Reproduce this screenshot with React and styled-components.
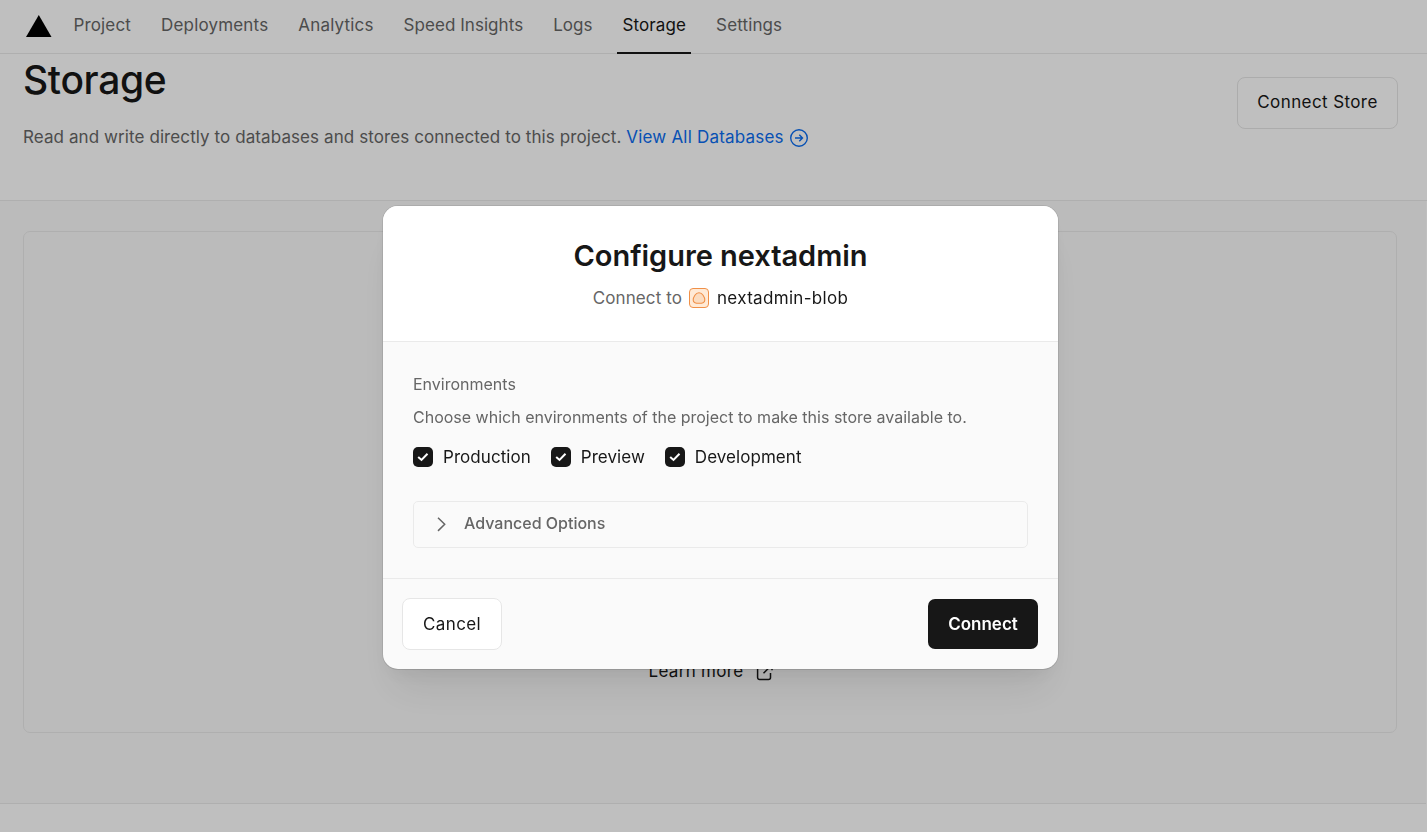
import React from 'react';
import styled, { createGlobalStyle } from 'styled-components';

const GlobalStyle = createGlobalStyle`
  * { box-sizing: border-box; }
  html, body { margin: 0; height: 100%; overflow: hidden; }
  body {
    background: #fff;
    color: #171717;
    font-family: Inter, 'Liberation Sans', sans-serif;
    font-size: 17px;
  }
  button { font: inherit; color: inherit; }
`;

const Page = styled.div`
  height: 832px;
  display: flex;
  flex-direction: column;
  overflow: hidden;
`;

const TopBar = styled.header`
  height: 54px;
  flex: none;
  display: flex;
  align-items: stretch;
  padding-left: 26px;
  border-bottom: 1px solid #eaeaea;
`;

const Logo = styled.svg`
  width: 26px;
  height: 22px;
  margin-top: 15px;
  margin-right: 16.4px;
`;

const Nav = styled.nav`
  display: flex;
  gap: 20px;
`;

const Tab = styled.a`
  height: 54px;
  padding: 0 5px;
  line-height: 51px;
  white-space: nowrap;
  letter-spacing: ${(p) => p.$tracking || 0}px;
  color: ${(p) => (p.$active ? '#171717' : '#666')};
  border-bottom: 2px solid ${(p) => (p.$active ? '#171717' : 'transparent')};
`;

const Hero = styled.section`
  height: 147px;
  flex: none;
  display: flex;
  justify-content: space-between;
  padding: 0 29px 0 23px;
  border-bottom: 1px solid #eaeaea;
`;

const PageTitle = styled.h1`
  margin: 0;
  font-size: 39px;
  line-height: 52px;
  font-weight: 500;
  letter-spacing: -0.35px;
`;

const Lead = styled.p`
  display: flex;
  align-items: center;
  margin: 18px 0 0;
  line-height: 26px;
  color: #666;
  white-space: pre;
  letter-spacing: 0.09px;
`;

const Link = styled.a`
  display: flex;
  align-items: center;
  gap: 6px;
  color: #0a6cf0;
  letter-spacing: 0.2px;
  svg { position: relative; top: 1px; }
`;

const Button = styled.button`
  width: ${(p) => p.$width}px;
  height: ${(p) => (p.$primary ? 50 : 52)}px;
  margin-top: ${(p) => p.$top || 0}px;
  padding: 0 0 ${(p) => (p.$top ? 2 : 1)}px;
  border-radius: ${(p) => (p.$primary ? 7 : 8)}px;
  border: ${(p) => (p.$primary ? 'none' : '1px solid #e6e6e6')};
  background: ${(p) => (p.$primary ? '#171717' : '#fff')};
  color: ${(p) => (p.$primary ? '#fff' : '#171717')};
  font-weight: ${(p) => (p.$primary ? 600 : 400)};
  letter-spacing: ${(p) => (p.$primary ? 0 : 0.4)}px;
`;

const Content = styled.main`
  height: 603px;
  flex: none;
  margin-right: 1px;
  padding: 30px 29px 0 23px;
  background: #fafafa;
  border-bottom: 1px solid #eaeaea;
`;

const EmptyState = styled.div`
  height: 502px;
  display: flex;
  align-items: flex-end;
  justify-content: center;
  padding: 0 0 48px 3px;
  border: 1px solid #eaeaea;
  border-radius: 7px;
`;

const LearnMore = styled.a`
  display: flex;
  align-items: center;
  gap: 13px;
  line-height: 26px;
  letter-spacing: 0.3px;
  svg { position: relative; top: 1px; }
`;

const Backdrop = styled.div`
  position: fixed;
  inset: 0;
  display: flex;
  align-items: flex-start;
  justify-content: center;
  padding: 206px 0 0 14px;
  background: rgba(0, 0, 0, 0.25);
`;

const Dialog = styled.div`
  width: 675px;
  height: 463px;
  display: flex;
  flex-direction: column;
  border-radius: 15px;
  overflow: hidden;
  background: #fafafa;
  box-shadow: 0 0 0 1px rgba(0, 0, 0, 0.08), 0 1px 1px rgba(0, 0, 0, 0.05),
    0 10px 20px -5px rgba(0, 0, 0, 0.06), 0 30px 40px -10px rgba(0, 0, 0, 0.08);
`;

const DialogHeader = styled.header`
  height: 136px;
  display: flex;
  flex-direction: column;
  align-items: center;
  padding-top: 30px;
  background: #fff;
  border-bottom: 1px solid #eaeaea;
`;

const DialogTitle = styled.h2`
  margin: 0;
  font-size: 29px;
  line-height: 39px;
  font-weight: 600;
  letter-spacing: -0.05px;
`;

const Target = styled.div`
  display: flex;
  align-items: center;
  margin-top: 10px;
  line-height: 26px;
  color: #666;
  letter-spacing: 0.1px;
  svg { margin: 0 8px 0 7px; }
`;

const StoreName = styled.span`
  color: #171717;
  letter-spacing: 0.32px;
`;

const DialogBody = styled.div`
  height: 237px;
  padding: 30px 30px 0;
  border-bottom: 1px solid #eaeaea;
`;

const Caption = styled.div`
  font-size: 16px;
  line-height: 25px;
  margin-bottom: 8px;
  color: #666;
`;

const Choices = styled.div`
  display: flex;
  gap: 20px;
  margin-top: 17px;
`;

const Choice = styled.label`
  display: flex;
  align-items: center;
  gap: 10px;
  line-height: 20px;
  letter-spacing: 0.05px;
`;

const Box = styled.span`
  width: 20px;
  height: 20px;
  display: grid;
  place-items: center;
  border-radius: 5px;
  background: #171717;
`;

const Disclosure = styled.div`
  height: 47px;
  display: flex;
  align-items: center;
  gap: 17px;
  margin-top: 34px;
  padding: 0 0 3px 22px;
  border: 1px solid #eaeaea;
  border-radius: 5px;
  color: #666;
  font-size: 16px;
  font-weight: 500;
  svg { position: relative; top: 1px; }
`;

const DialogFooter = styled.footer`
  flex: 1;
  display: flex;
  align-items: center;
  justify-content: space-between;
  padding: 0 20px 0 19px;
`;

const tabs = [
  ['Project', 0.17],
  ['Deployments', 0.17],
  ['Analytics', 0.18],
  ['Speed Insights', 0.05],
  ['Logs', 0],
  ['Storage', 0.13],
  ['Settings', 0.13],
];

const environments = ['Production', 'Preview', 'Development'];

function ArrowCircle() {
  return (
    <svg width="18" height="18" viewBox="0 0 18 18" fill="none" stroke="currentColor" strokeWidth="1.4">
      <circle cx="9" cy="9" r="8.3" />
      <path d="M5 9h7.4M9.3 5.8L12.5 9l-3.2 3.2" />
    </svg>
  );
}

function ExternalIcon() {
  return (
    <svg width="18" height="18" viewBox="0 0 18 18" fill="none" stroke="currentColor" strokeWidth="1.5">
      <path d="M7 2H3.5A2 2 0 0 0 1.600 4v10.500a2 2 0 0 0 2 2H12.500a2 2 0 0 0 2-2V10M10.500 1.800H16v5.500M16 1.800l-8.500 8.500" />
    </svg>
  );
}

function BlobIcon() {
  return (
    <svg width="20" height="20" viewBox="0 0 20 20" fill="#ffead6" stroke="#f09048">
      <rect x="0.5" y="0.5" width="19" height="19" rx="3.5" />
      <path
        d="M10 4.800c-2 0-3 .8-4.100 2.500-1 1.500-1.700 2.900-1.700 4.600 0 2.300 1.600 3.400 5.800 3.400s5.800-1.100 5.800-3.400c0-1.700-.7-3.100-1.700-4.600-1.100-1.700-2.100-2.500-4.100-2.500z"
        fill="#fbdcc0"
        strokeWidth="1.1"
      />
    </svg>
  );
}

function CheckIcon() {
  return (
    <svg width="20" height="20" viewBox="0 0 20 20" fill="none" stroke="#fff" strokeWidth="2">
      <path d="M5.200 9.900l3.300 3 6-6.200" />
    </svg>
  );
}

function ChevronIcon() {
  return (
    <svg width="11" height="16" viewBox="0 0 11 16" fill="none" stroke="currentColor" strokeWidth="1.5">
      <path d="M2 1.700L8.700 8.300 2 14.900" />
    </svg>
  );
}

export default function App() {
  return (
    <>
      <GlobalStyle />
      <Page>
        <TopBar>
          <Logo viewBox="0 0 26 22">
            <path d="M12.800 0l12.700 22H0z" fill="#000" />
          </Logo>
          <Nav>
            {tabs.map(([label, tracking]) => (
              <Tab key={label} $active={label === 'Storage'} $tracking={tracking}>
                {label}
              </Tab>
            ))}
          </Nav>
        </TopBar>
        <Hero>
          <div>
            <PageTitle>Storage</PageTitle>
            <Lead>
              {'Read and write directly to databases and stores connected to this project. '}
              <Link>
                View All Databases
                <ArrowCircle />
              </Link>
            </Lead>
          </div>
          <Button $width={161} $top={23}>Connect Store</Button>
        </Hero>
        <Content>
          <EmptyState>
            <LearnMore>
              Learn more
              <ExternalIcon />
            </LearnMore>
          </EmptyState>
        </Content>
      </Page>
      <Backdrop>
        <Dialog role="dialog">
          <DialogHeader>
            <DialogTitle>Configure nextadmin</DialogTitle>
            <Target>
              Connect to
              <BlobIcon />
              <StoreName>nextadmin-blob</StoreName>
            </Target>
          </DialogHeader>
          <DialogBody>
            <Caption>Environments</Caption>
            <Caption>Choose which environments of the project to make this store available to.</Caption>
            <Choices>
              {environments.map((label) => (
                <Choice key={label}>
                  <Box><CheckIcon /></Box>
                  {label}
                </Choice>
              ))}
            </Choices>
            <Disclosure>
              <ChevronIcon />
              Advanced Options
            </Disclosure>
          </DialogBody>
          <DialogFooter>
            <Button $width={100}>Cancel</Button>
            <Button $width={110} $primary>Connect</Button>
          </DialogFooter>
        </Dialog>
      </Backdrop>
    </>
  );
}
